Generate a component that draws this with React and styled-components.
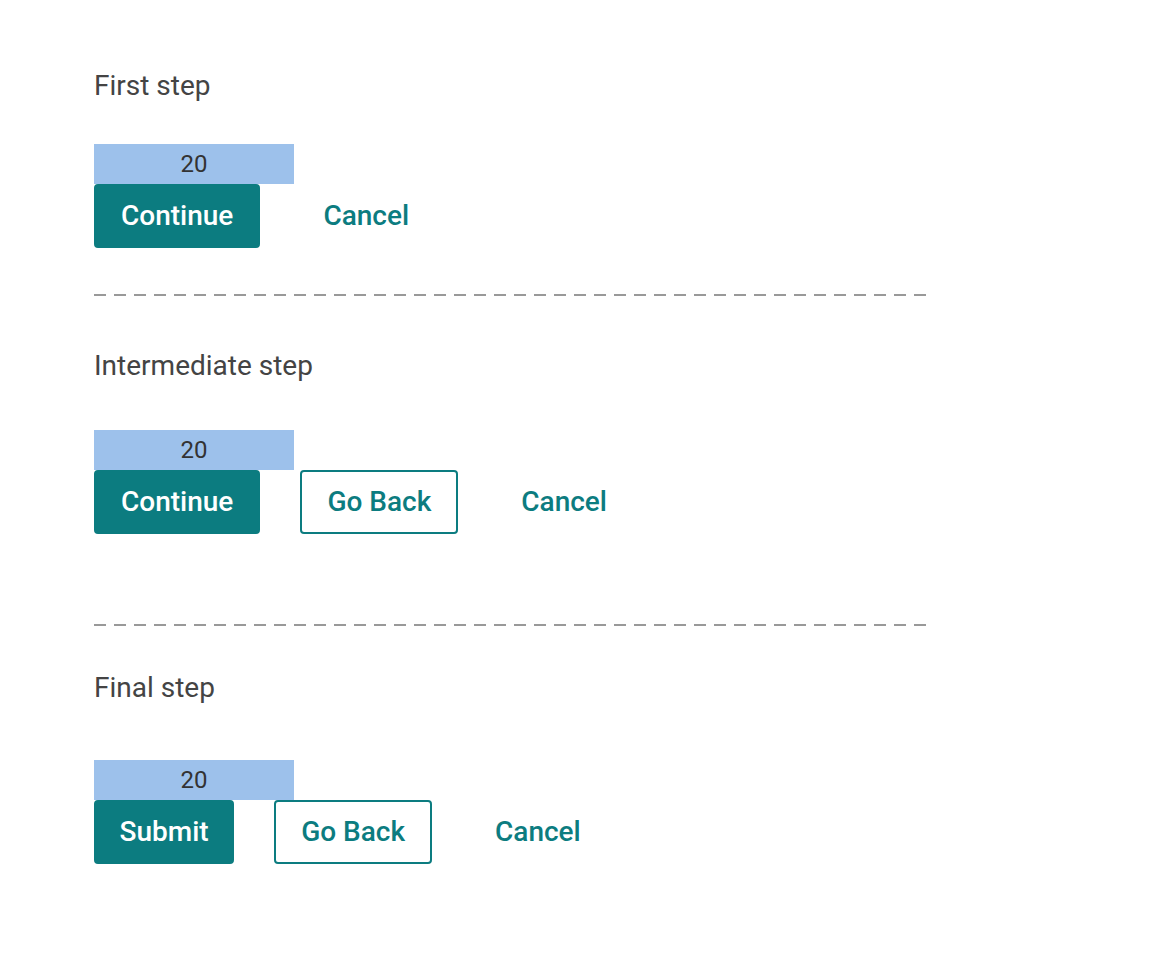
import React from "react";
import styled, { createGlobalStyle, css } from "styled-components";

const Global = createGlobalStyle`
  html, body { margin: 0; padding: 0; background: #ffffff; }
  body { font-family: Roboto, "Noto Sans", "Liberation Sans", sans-serif; }
  * { box-sizing: border-box; }
`;

const Page = styled.main`
  padding: 70px 0 0 94px;
  width: 926px;
`;

const Section = styled.section`
  display: flex;
  flex-direction: column;
  align-items: flex-start;
`;

const Heading = styled.h2`
  margin: 0;
  font-size: 28px;
  line-height: 32px;
  font-weight: 400;
  color: #444444;
  margin-bottom: ${(p) => p.$gap}px;
`;

const Spacer = styled.div`
  width: 200px;
  height: 40px;
  background: #9dc1eb;
  color: #333333;
  font-size: 24px;
  line-height: 40px;
  text-align: center;
`;

const Actions = styled.div`
  display: flex;
  gap: 40px;
  align-items: center;
`;

const variants = {
  primary: css`
    border: 2px solid #0c7c80;
    background: #0c7c80;
    color: #ffffff;
  `,
  outline: css`
    border: 2px solid #0c7c80;
    background: #ffffff;
    color: #0c7c80;
  `,
  link: css`
    border: none;
    background: transparent;
    color: #0c7c80;
  `,
};

const Button = styled.button`
  height: 64px;
  padding: 0 ${(p) => p.$pad ?? (p.$variant === "link" ? 23 : 25)}px;
  border-radius: 4px;
  font-family: inherit;
  font-size: 28px;
  font-weight: 500;
  line-height: 1;
  cursor: pointer;
  ${(p) => variants[p.$variant]}
`;

const Divider = styled.hr`
  width: 832px;
  height: 2px;
  border: none;
  margin: ${(p) => p.$top}px 0 ${(p) => p.$bottom}px;
  background: repeating-linear-gradient(
    to right,
    #999999 0 12px,
    transparent 12px 20px
  );
`;

export default function App() {
  return (
    <>
      <Global />
      <Page>
        <Section>
          <Heading $gap={42}>First step</Heading>
          <Spacer>20</Spacer>
          <Actions>
            <Button $variant="primary">Continue</Button>
            <Button $variant="link">Cancel</Button>
          </Actions>
        </Section>
        <Divider $top={46} $bottom={54} />
        <Section>
          <Heading $gap={48}>Intermediate step</Heading>
          <Spacer>20</Spacer>
          <Actions>
            <Button $variant="primary">Continue</Button>
            <Button $variant="outline">Go Back</Button>
            <Button $variant="link">Cancel</Button>
          </Actions>
        </Section>
        <Divider $top={90} $bottom={46} />
        <Section>
          <Heading $gap={56}>Final step</Heading>
          <Spacer>20</Spacer>
          <Actions>
            <Button $variant="primary" $pad={23.5}>Submit</Button>
            <Button $variant="outline">Go Back</Button>
            <Button $variant="link">Cancel</Button>
          </Actions>
        </Section>
      </Page>
    </>
  );
}
